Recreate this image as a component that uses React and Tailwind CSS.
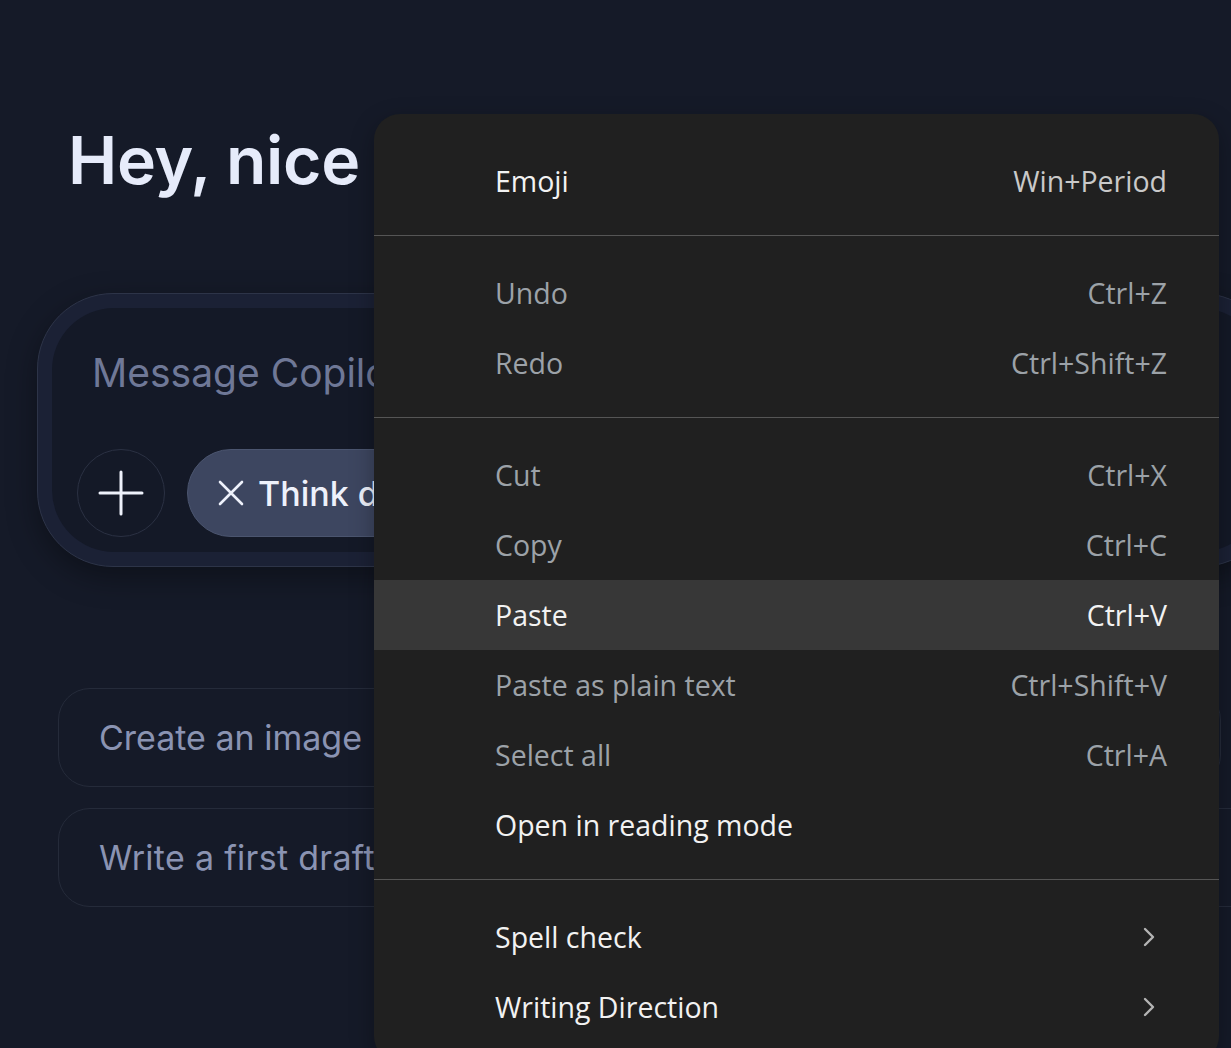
import React from 'react';

const menuGroups = [
  [{ label: 'Emoji', shortcut: 'Win+Period' }],
  [
    { label: 'Undo', shortcut: 'Ctrl+Z', disabled: true },
    { label: 'Redo', shortcut: 'Ctrl+Shift+Z', disabled: true },
  ],
  [
    { label: 'Cut', shortcut: 'Ctrl+X', disabled: true },
    { label: 'Copy', shortcut: 'Ctrl+C', disabled: true },
    { label: 'Paste', shortcut: 'Ctrl+V', active: true },
    { label: 'Paste as plain text', shortcut: 'Ctrl+Shift+V', disabled: true },
    { label: 'Select all', shortcut: 'Ctrl+A', disabled: true },
    { label: 'Open in reading mode' },
  ],
  [
    { label: 'Spell check', submenu: true },
    { label: 'Writing Direction', submenu: true },
  ],
];

const Chevron = () => (
  <svg width="12" height="20" viewBox="0 0 12 20" fill="none" className="mr-[12px]">
    <path d="M2 2 L10 10 L2 18" stroke="#b4b4b4" strokeWidth="2.4" strokeLinecap="round" strokeLinejoin="round" />
  </svg>
);

const MenuRow = ({ item }) => (
  <div
    className={`flex h-[70px] items-center justify-between pl-[121px] pr-[52px] ${
      item.active ? 'bg-[#373737]' : ''
    }`}
  >
    <span className={item.disabled ? 'text-[#9ca2a8]' : 'text-[#f2f2f2]'}>{item.label}</span>
    {item.submenu ? (
      <Chevron />
    ) : (
      <span
        className={
          item.active ? 'text-[#f2f2f2]' : item.disabled ? 'text-[#9ca2a8]' : 'text-[#c9c9c9]'
        }
      >
        {item.shortcut}
      </span>
    )}
  </div>
);

const ContextMenu = () => (
  <div
    className="absolute left-[374px] top-[114px] w-[845px] rounded-[26px] bg-[#202020] pt-[32px] pb-[20px] text-[28.5px] shadow-[0_8px_24px_rgba(0,0,0,0.3)]"
    style={{ fontFamily: '"Open Sans", "Noto Sans", sans-serif' }}
  >
    {menuGroups.map((group, i) => (
      <div key={i}>
        {i > 0 && <div className="mt-[19px] mb-[22px] h-px bg-[#555555]" />}
        {group.map((item) => (
          <MenuRow key={item.label} item={item} />
        ))}
      </div>
    ))}
  </div>
);

export default function App() {
  return (
    <div
      className="relative h-[1048px] w-[1231px] overflow-hidden bg-[#151a28]"
      style={{ fontFamily: 'Inter, "Noto Sans", sans-serif' }}
    >
      <div className="pl-[37px] pt-[118px]">
        <h1 className="pl-[31px] text-[66px] font-semibold leading-[84px] tracking-[-0.3px] text-[#e6ebfa]">
          Hey, nice to see you
        </h1>

        {/* composer */}
        <div className="mt-[91px] h-[274px] w-[1240px] rounded-[76px] border border-[#2d3448] bg-[#1b2135] p-[14px] shadow-[0_10px_30px_rgba(0,0,0,0.35)]">
          <div className="h-full rounded-[62px] bg-[#141927] px-[25px] pt-[41px]">
            <div className="pl-[15px] text-[39px] leading-[48px] text-[#6f7897]">Message Copilot</div>
            <div className="mt-[52px] flex items-center gap-[22px]">
              <button className="flex h-[88px] w-[88px] items-center justify-center rounded-full border border-[#2b3143] bg-[#141927]">
                <svg width="46" height="46" viewBox="0 0 46 46" fill="none">
                  <path d="M23 2 V44 M2 23 H44" stroke="#eef1fb" strokeWidth="3" strokeLinecap="round" />
                </svg>
              </button>
              <div className="flex h-[88px] items-center gap-[14px] rounded-full border border-[#4b556f] bg-[#3d4660] pl-[30px] pr-[32px]">
                <svg width="26" height="26" viewBox="0 0 26 26" fill="none">
                  <path d="M2 2 L24 24 M24 2 L2 24" stroke="#eef1fb" strokeWidth="2.6" strokeLinecap="round" />
                </svg>
                <span className="text-[34px] font-medium text-[#eef1fb]">Think deeper</span>
              </div>
            </div>
          </div>
        </div>

        {/* suggestions */}
        <div className="mt-[121px] ml-[21px] flex flex-col gap-[21px]">
          <div className="flex h-[99px] w-[1163px] items-center rounded-[32px] border border-[#252b3a] px-[40px]">
            <span className="text-[34px] text-[#8a93b2]">Create an image</span>
          </div>
          <div className="flex h-[99px] w-[1220px] items-center rounded-[32px] border border-[#252b3a] pl-[40px] pr-[36px]">
            <span className="text-[34px] tracking-[0.3px] text-[#8a93b2]">Write a first draft</span>
            <span className="ml-auto h-[3px] w-[7px] bg-[#8a93b2]" />
          </div>
        </div>
      </div>

      <ContextMenu />
    </div>
  );
}
